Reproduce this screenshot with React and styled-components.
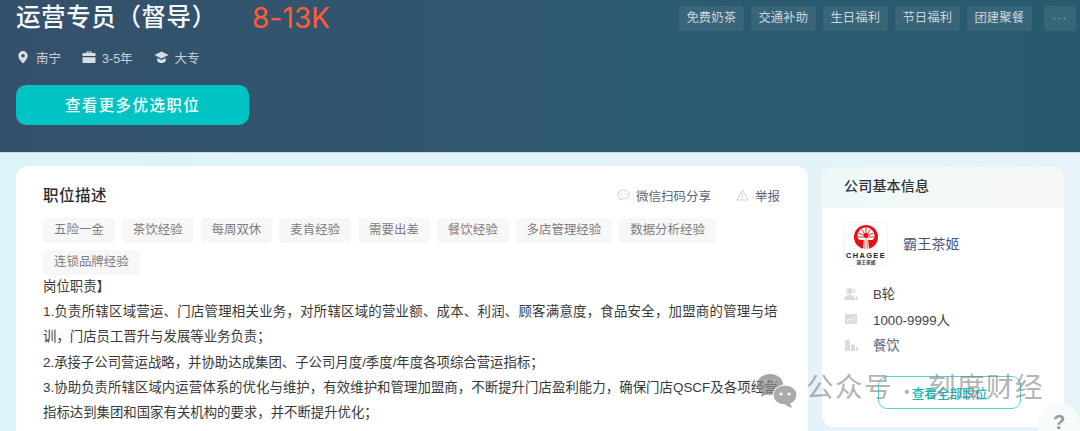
import React from "react";
import styled, { createGlobalStyle } from "styled-components";

const FONT = `"Liberation Sans", "Noto Sans CJK SC", sans-serif`;

const GlobalStyle = createGlobalStyle`
  html, body {
    margin: 0;
    padding: 0;
    width: 1080px;
    height: 431px;
    overflow: hidden;
  }
  body {
    font-family: ${FONT};
    background: #e3f3f7;
  }
`;

const Page = styled.div`
  position: relative;
  width: 1080px;
  height: 431px;
  overflow: hidden;
  background: linear-gradient(90deg, #def3f7 0%, #e6f3f8 100%);
`;

const Banner = styled.header`
  box-sizing: border-box;
  height: 153px;
  padding: 0 4px 0 16px;
  display: flex;
  justify-content: space-between;
  background: linear-gradient(90deg, #36506b 0%, #2c5a70 60%, #285a6e 100%);
  border-bottom: 1px solid #c4dde3;
`;

const BannerLeft = styled.div`
  display: flex;
  flex-direction: column;
`;

const TitleRow = styled.div`
  display: flex;
  align-items: center;
  height: 36px;
`;

const Title = styled.h1`
  margin: 0;
  width: 236px;
  font-size: 24.5px;
  line-height: 36px;
  font-weight: 500;
  letter-spacing: 0.6px;
  color: #f6f8f9;
  white-space: nowrap;
`;

const Salary = styled.span`
  font-family: "Inter", sans-serif;
  font-size: 28px;
  font-weight: 400;
  letter-spacing: 0.1px;
  color: #ff5c35;
`;

const MetaRow = styled.div`
  display: flex;
  align-items: center;
  gap: 21px;
  margin-top: 12px;
  height: 18px;
`;

const MetaItem = styled.span`
  display: inline-flex;
  align-items: center;
  gap: 6px;
  font-size: 12.5px;
  color: #c7d1da;
  svg {
    display: block;
  }
`;

const MoreButton = styled.button`
  margin-top: 19px;
  width: 233px;
  height: 40px;
  padding: 0 0 2px;
  border: 0;
  border-radius: 10px;
  background: #00c4c4;
  color: #f3fdfd;
  font-family: inherit;
  font-size: 15.5px;
  font-weight: 500;
  letter-spacing: 1.4px;
`;

const PerkRow = styled.div`
  display: flex;
  align-items: flex-start;
  gap: 7.5px;
  padding-top: 6px;
`;

const Perk = styled.span`
  box-sizing: border-box;
  width: 64.5px;
  height: 25px;
  line-height: 24px;
  border-radius: 3px;
  text-align: center;
  font-size: 12.3px;
  letter-spacing: 0.1px;
  color: #c9d6dd;
  background: rgba(255, 255, 255, 0.07);
`;

const PerkMore = styled(Perk)`
  width: 32px;
  margin-left: 5px;
  font-size: 11px;
  letter-spacing: 1.5px;
  color: #a9bcc6;
`;

const Content = styled.main`
  display: flex;
  align-items: flex-start;
  gap: 14px;
  padding: 13px 16px 0;
`;

const JobCard = styled.section`
  box-sizing: border-box;
  width: 792px;
  height: 300px;
  padding: 17px 28px 0 27px;
  border-radius: 12px 12px 0 0;
  background: #fff;
`;

const CardHead = styled.div`
  display: flex;
  align-items: center;
  justify-content: space-between;
  height: 24px;
`;

const CardTitle = styled.h2`
  margin: 0 0 3px;
  font-size: 15.5px;
  font-weight: 500;
  letter-spacing: 0.5px;
  color: #2c2c2c;
`;

const CardActions = styled.div`
  display: flex;
  align-items: center;
  gap: 25px;
`;

const Action = styled.span`
  display: inline-flex;
  align-items: center;
  gap: 6px;
  font-size: 12.5px;
  color: #5b6580;
  svg {
    display: block;
  }
`;

const SkillList = styled.div`
  display: flex;
  flex-wrap: wrap;
  gap: 7px;
  margin: 11px 0 -1px;
`;

const Skill = styled.span`
  box-sizing: border-box;
  height: 25px;
  line-height: 24px;
  padding: 0 11px;
  border-radius: 4px;
  font-size: 12.45px;
  color: #7d7d7d;
  background: #f7f7f7;
`;

const Duty = styled.p`
  width: 734.5px;
  margin: 0;
  font-size: 13.4px;
  line-height: 25.2px;
  color: #3a3a3a;
  text-align: justify;
`;

const Side = styled.aside`
  box-sizing: border-box;
  width: 242px;
  height: 260px;
  margin-top: 1px;
  border-radius: 12px;
  background: #fff;
  overflow: hidden;
`;

const SideHead = styled.div`
  height: 41px;
  padding-left: 22px;
  line-height: 38px;
  font-size: 14px;
  font-weight: 500;
  letter-spacing: 0.2px;
  color: #333;
  background: linear-gradient(90deg, #eef8f9 0%, #f7f8f6 100%);
`;

const CompanyRow = styled.div`
  display: flex;
  align-items: center;
  gap: 15px;
  padding: 14px 0 0 22px;
`;

const Logo = styled.div`
  box-sizing: border-box;
  width: 44px;
  height: 44px;
  border: 1px solid #f2f3f5;
  border-radius: 6px;
  overflow: hidden;
  background: #fff;
  svg {
    display: block;
  }
`;

const CompanyName = styled.span`
  margin-bottom: 2px;
  font-size: 14px;
  letter-spacing: 0.2px;
  color: #4b5578;
`;

const FactList = styled.div`
  display: flex;
  flex-direction: column;
  margin-top: 15px;
  padding-left: 22px;
`;

const Fact = styled.div`
  display: flex;
  align-items: center;
  gap: 15px;
  height: 25.5px;
  font-size: 13.3px;
  color: ${(p) => (p.$link ? "#5d6785" : "#444")};
  svg {
    display: block;
  }
`;

const AllJobs = styled.button`
  display: block;
  box-sizing: border-box;
  width: 143px;
  height: 33px;
  margin: 18px 0 0 56px;
  border: 1.5px solid #52d3d3;
  border-radius: 9px;
  background: #fff;
  color: #12b5b5;
  font-family: inherit;
  font-size: 12.6px;
  font-weight: 500;
`;

/* 公众号水印，压在页面内容上面 */
const Watermark = styled.div`
  position: absolute;
  left: 757px;
  top: 368px;
  display: flex;
  align-items: center;
  gap: 9px;
  color: rgba(130, 130, 130, 0.62);
  font-size: 27.5px;
  line-height: 40px;
  letter-spacing: 1.5px;
  white-space: nowrap;
  svg {
    display: block;
  }
`;

const WaterDot = styled.span`
  margin: 0 17px 0 11px;
  font-size: 16px;
`;

const HelpBubble = styled.div`
  position: absolute;
  left: 1038px;
  bottom: 0;
  box-sizing: border-box;
  width: 42px;
  height: 28px;
  padding-top: 10px;
  border-radius: 22px 22px 0 0;
  background: #f7fbfc;
  text-align: center;
  font-size: 20px;
  font-weight: 700;
  line-height: 18px;
  color: #9a9a9a;
`;

const perks = ["免费奶茶", "交通补助", "生日福利", "节日福利", "团建聚餐"];
const skills = [
  "五险一金",
  "茶饮经验",
  "每周双休",
  "麦肯经验",
  "需要出差",
  "餐饮经验",
  "多店管理经验",
  "数据分析经验",
  "连锁品牌经验",
];

const PinIcon = () => (
  <svg width="14" height="14" viewBox="0 0 14 14">
    <path
      fillRule="evenodd"
      d="M7 1a4.7 4.7 0 0 0-4.7 4.7C2.3 9 7 13.4 7 13.4s4.7-4.4 4.7-7.7A4.7 4.7 0 0 0 7 1zm0 3a1.8 1.8 0 1 1 0 3.6A1.8 1.8 0 0 1 7 4z"
      fill="#d7dfe5"
    />
  </svg>
);

const CaseIcon = () => (
  <svg width="14" height="14" viewBox="0 0 14 14" fill="#d7dfe5">
    <path d="M4.5 3V1.5h5V3h3.3c.4 0 .7.3.7.7V6H.5V3.7c0-.4.3-.7.7-.7zm1-.6V3h3v-.6z" fillRule="evenodd" />
    <path d="M.5 7.2h13v5c0 .5-.3.8-.8.8H1.3c-.5 0-.8-.3-.8-.8z" />
  </svg>
);

const CapIcon = () => (
  <svg width="15" height="14" viewBox="0 0 15 14" fill="#d7dfe5">
    <path d="M7.5 1.5L14.5 5 7.5 8.5.5 5z" />
    <path d="M3.3 8l4.2 2 4.2-2v3.2c-1 1.2-2.5 1.8-4.2 1.8s-3.2-.6-4.2-1.8z" />
  </svg>
);

const ChageeLogo = () => (
  <svg width="42" height="42" viewBox="0 0 42 42">
    <circle cx="21" cy="14" r="12" fill="#e60f17" />
    <path d="M21 4.5a8.5 8.5 0 0 0-8.5 8.5c0 2 .9 3.4 2.5 4h12c1.6-.6 2.5-2 2.5-4A8.5 8.5 0 0 0 21 4.5z" fill="#fff" />
    <path
      d="M21 5v8M16.5 6.3L21 13M25.5 6.3L21 13M13.5 10L21 13M28.5 10L21 13M13 14h16"
      stroke="#e60f17"
      strokeWidth="0.9"
    />
    <circle cx="21" cy="12.5" r="2.4" fill="#e60f17" />
    <path d="M19 15h4l1 11h-6z" fill="#fff" />
    <path d="M21 15v11M19.3 17v9M22.7 17v9" stroke="#b4232a" strokeWidth="0.5" />
    <text x="21" y="34.5" textAnchor="middle" fontFamily="Liberation Sans, sans-serif" fontSize="7.5" fontWeight="700" letterSpacing="1.3" fill="#222">
      CHAGEE
    </text>
    <text x="21" y="40.5" textAnchor="middle" fontFamily="Noto Sans CJK SC, sans-serif" fontSize="4.8" fontWeight="700" fill="#444">
      霸王茶姬
    </text>
  </svg>
);

const BubbleIcon = () => (
  <svg width="13" height="12" viewBox="0 0 13 12" fill="none">
    <path d="M6.5 1C3.4 1 1 3 1 5.5c0 1.5.8 2.7 2.1 3.5L3 11l2.3-1.2c.4.1.8.1 1.2.1 3.1 0 5.5-2 5.5-4.4S9.6 1 6.5 1z" stroke="#c9ced6" strokeWidth="1" />
    <circle cx="4.6" cy="5.4" r=".6" fill="#c9ced6" />
    <circle cx="8.4" cy="5.4" r=".6" fill="#c9ced6" />
  </svg>
);

const WarnIcon = () => (
  <svg width="13" height="12" viewBox="0 0 13 12" fill="none">
    <path d="M6.5 1L12.2 11H.8L6.5 1z" stroke="#c9ced6" strokeWidth="1" strokeLinejoin="round" />
    <path d="M6.5 4.5v3.2" stroke="#c9ced6" strokeWidth="1" />
    <circle cx="6.5" cy="9.2" r=".6" fill="#c9ced6" />
  </svg>
);

const PeopleIcon = () => (
  <svg width="14" height="14" viewBox="0 0 14 14" fill="#dcdcdc">
    <circle cx="5.5" cy="4" r="3.2" />
    <path d="M0 13c0-3.2 2.4-5 5.5-5s5.5 1.8 5.5 5H0z" />
    <path d="M9.5 1.2a3 3 0 0 1 0 5.6zM11 8c1.8.6 3 2.2 3 5h-2c0-2-.4-3.6-1-5z" />
  </svg>
);

const ChartIcon = () => (
  <svg width="14" height="14" viewBox="0 0 14 14">
    <rect x="1" y="2" width="12" height="10" fill="#dcdcdc" />
    <path d="M3 9l2.5-2 2 1L11 5" stroke="#fff" strokeWidth="1" fill="none" />
  </svg>
);

const BuildingIcon = () => (
  <svg width="14" height="14" viewBox="0 0 14 14" fill="#dcdcdc">
    <path d="M1 13V3l5-2v12zM7 13V6l4 1v6zM12 13V9h2v4z" />
  </svg>
);

const WechatIcon = () => (
  <svg width="40" height="37" viewBox="0 0 40 37">
    <g fill="rgba(130,130,130,0.72)">
      <ellipse cx="13" cy="12.5" rx="13" ry="10.5" />
      <path d="M5 20l-1 5 6-3z" />
    </g>
    <circle cx="9" cy="9" r="1.3" fill="rgba(255,255,255,0.5)" />
    <circle cx="17" cy="9" r="1.3" fill="rgba(255,255,255,0.5)" />
    <ellipse cx="28" cy="23" rx="12" ry="10" fill="#aaa" stroke="#fff" strokeWidth="1" />
    <path d="M33 31l2 5-7-3z" fill="#aaa" />
    <circle cx="24" cy="22" r="1.5" fill="#fff" />
    <circle cx="32" cy="22" r="1.5" fill="#fff" />
  </svg>
);

export default function App() {
  return (
    <>
      <GlobalStyle />
      <Page>
        <Banner>
          <BannerLeft>
            <TitleRow>
              <Title>运营专员（督导）</Title>
              <Salary>8-13K</Salary>
            </TitleRow>
            <MetaRow>
              <MetaItem>
                <PinIcon />
                南宁
              </MetaItem>
              <MetaItem>
                <CaseIcon />
                3-5年
              </MetaItem>
              <MetaItem>
                <CapIcon />
                大专
              </MetaItem>
            </MetaRow>
            <MoreButton>查看更多优选职位</MoreButton>
          </BannerLeft>
          <PerkRow>
            {perks.map((perk) => (
              <Perk key={perk}>{perk}</Perk>
            ))}
            <PerkMore>···</PerkMore>
          </PerkRow>
        </Banner>
        <Content>
          <JobCard>
            <CardHead>
              <CardTitle>职位描述</CardTitle>
              <CardActions>
                <Action>
                  <BubbleIcon />
                  微信扫码分享
                </Action>
                <Action>
                  <WarnIcon />
                  举报
                </Action>
              </CardActions>
            </CardHead>
            <SkillList>
              {skills.map((skill) => (
                <Skill key={skill}>{skill}</Skill>
              ))}
            </SkillList>
            <Duty>岗位职责】</Duty>
            <Duty>1.负责所辖区域营运、门店管理相关业务，对所辖区域的营业额、成本、利润、顾客满意度，食品安全，加盟商的管理与培训，门店员工晋升与发展等业务负责；</Duty>
            <Duty>2.承接子公司营运战略，并协助达成集团、子公司月度/季度/年度各项综合营运指标；</Duty>
            <Duty>3.协助负责所辖区域内运营体系的优化与维护，有效维护和管理加盟商，不断提升门店盈利能力，确保门店QSCF及各项经营指标达到集团和国家有关机构的要求，并不断提升优化；</Duty>
          </JobCard>
          <Side>
            <SideHead>公司基本信息</SideHead>
            <CompanyRow>
              <Logo>
                <ChageeLogo />
              </Logo>
              <CompanyName>霸王茶姬</CompanyName>
            </CompanyRow>
            <FactList>
              <Fact>
                <PeopleIcon />
                B轮
              </Fact>
              <Fact>
                <ChartIcon />
                1000-9999人
              </Fact>
              <Fact $link>
                <BuildingIcon />
                餐饮
              </Fact>
            </FactList>
            <AllJobs>查看全部职位</AllJobs>
          </Side>
        </Content>
        <Watermark>
          <WechatIcon />
          <span>
            公众号<WaterDot>•</WaterDot>刻度财经
          </span>
        </Watermark>
        <HelpBubble>?</HelpBubble>
      </Page>
    </>
  );
}
